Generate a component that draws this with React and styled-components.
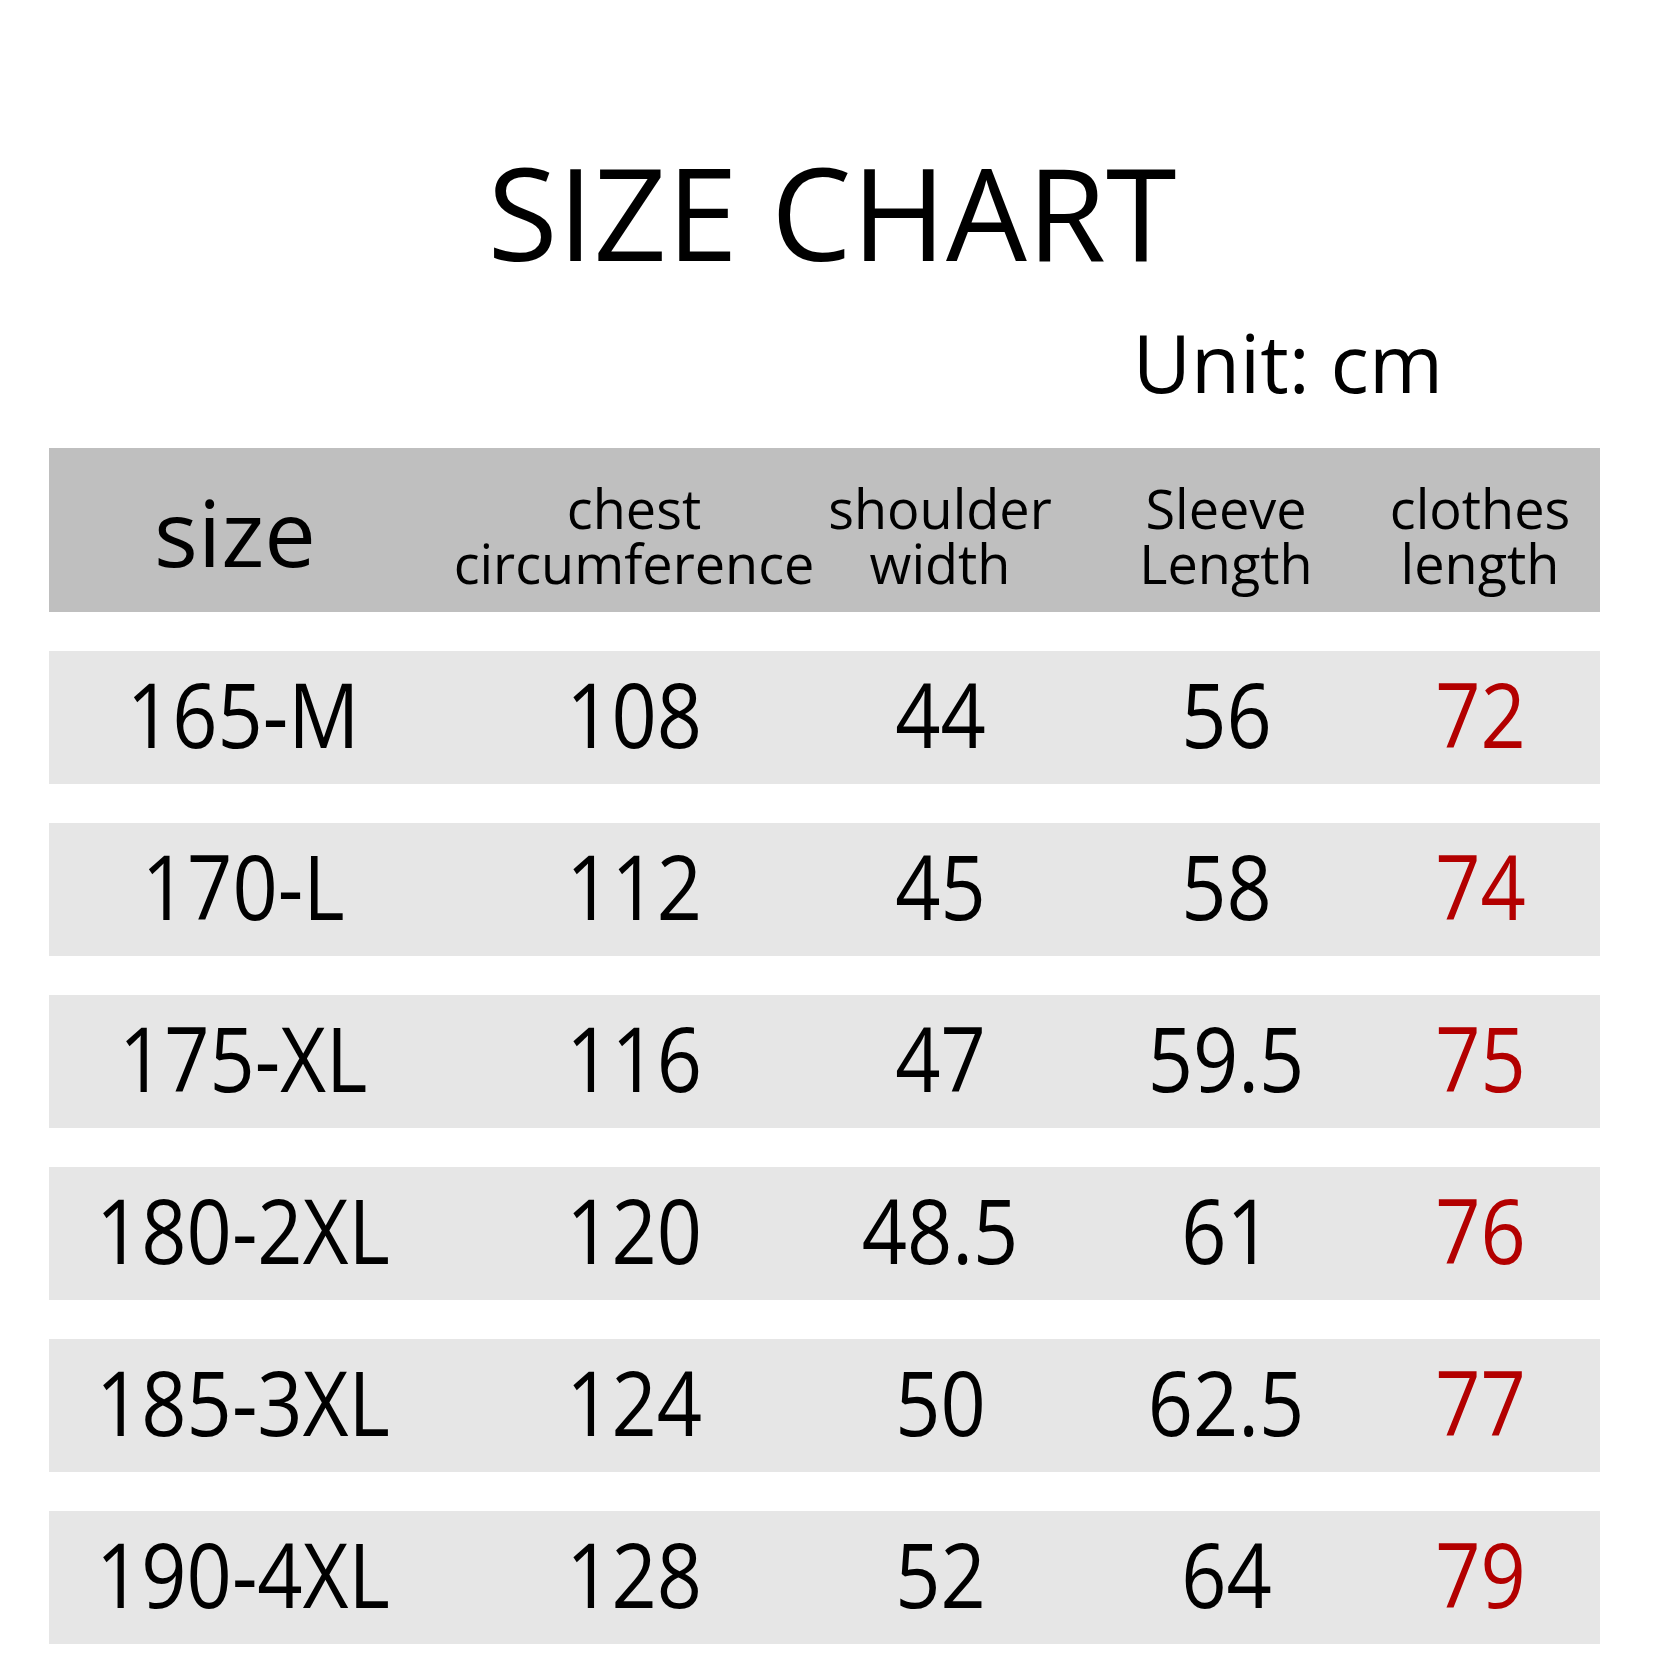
import React from 'react';
import styled, { createGlobalStyle } from 'styled-components';

const rows = [
  ['165-M', '108', '44', '56', '72'],
  ['170-L', '112', '45', '58', '74'],
  ['175-XL', '116', '47', '59.5', '75'],
  ['180-2XL', '120', '48.5', '61', '76'],
  ['185-3XL', '124', '50', '62.5', '77'],
  ['190-4XL', '128', '52', '64', '79'],
];

const heads = [
  ['chest', 'circumference'],
  ['shoulder', 'width'],
  ['Sleeve', 'Length'],
  ['clothes', 'length'],
];

function App() {
  return (
    <Page>
      <GlobalStyle />
      <Title>SIZE CHART</Title>
      <UnitRow>
        <Unit>Unit: cm</Unit>
      </UnitRow>
      <Table>
        <HeadRow>
          <Cell>
            <SizeHead>size</SizeHead>
          </Cell>
          {heads.map(h => (
            <Cell key={h[0]}>
              <HeadLabel>
                {h[0]}
                <br />
                {h[1]}
              </HeadLabel>
            </Cell>
          ))}
        </HeadRow>
        {rows.map(r => (
          <BodyRow key={r[0]}>
            {r.map((v, i) => (
              <Cell key={i}>
                <Value $accent={i === r.length - 1}>{v}</Value>
              </Cell>
            ))}
          </BodyRow>
        ))}
      </Table>
    </Page>
  );
}

const GlobalStyle = createGlobalStyle`
  html, body {
    margin: 0;
    padding: 0;
    background: #ffffff;
  }
  body {
    font-family: "Open Sans", "Noto Sans", sans-serif;
    color: #000000;
  }
`;

const
  Page = styled.div`
    width: 1656px;
    height: 1656px;
    box-sizing: border-box;
    padding-top: 148px;
    overflow: hidden;
    display: flex;
    flex-direction: column;
  `,
  Title = styled.h1`
    margin: 0;
    font-family: "Open Sans", "Noto Sans", sans-serif;
    font-weight: 400;
    font-size: 128px;
    line-height: 128px;
    text-align: center;
    padding-left: 8px;
    color: #000;
  `,
  UnitRow = styled.div`
    display: flex;
    justify-content: flex-end;
    padding-right: 213px;
    margin-top: 46px;
  `,
  Unit = styled.div`
    font-size: 80px;
    line-height: 80px;
    color: #000;
  `,
  Table = styled.div`
    margin: 46px 0 0 49px;
    width: 1551px;
    display: flex;
    flex-direction: column;
    gap: 39px;
  `;

const
  HeadRow = styled.div`
    height: 164px;
    box-sizing: border-box;
    padding: 12px 43px 0 0;
    background: #bfbfbf;
    display: grid;
    grid-template-columns: 388px 394px 218px 354px 154px;
    align-items: center;
  `,
  BodyRow = styled(HeadRow)`
    height: 133px;
    padding-top: 0;
    background: #e6e6e6;
  `,
  Cell = styled.div`
    display: flex;
    justify-content: center;
    align-items: center;
    white-space: nowrap;
  `,
  SizeHead = styled.div`
    font-size: 92px;
    line-height: 92px;
    padding: 0 16px 8px 0;
    color: #000;
  `,
  HeadLabel = styled.div`
    font-size: 54px;
    line-height: 55px;
    text-align: center;
    color: #000;
  `,
  Value = styled.div`
    font-family: "Open Sans", "Noto Sans", sans-serif;
    font-size: 90px;
    line-height: 90px;
    padding-bottom: 10px;
    transform: scaleX(0.88);
    color: ${p => (p.$accent ? '#b30000' : '#000000')};
  `;

export default App;
